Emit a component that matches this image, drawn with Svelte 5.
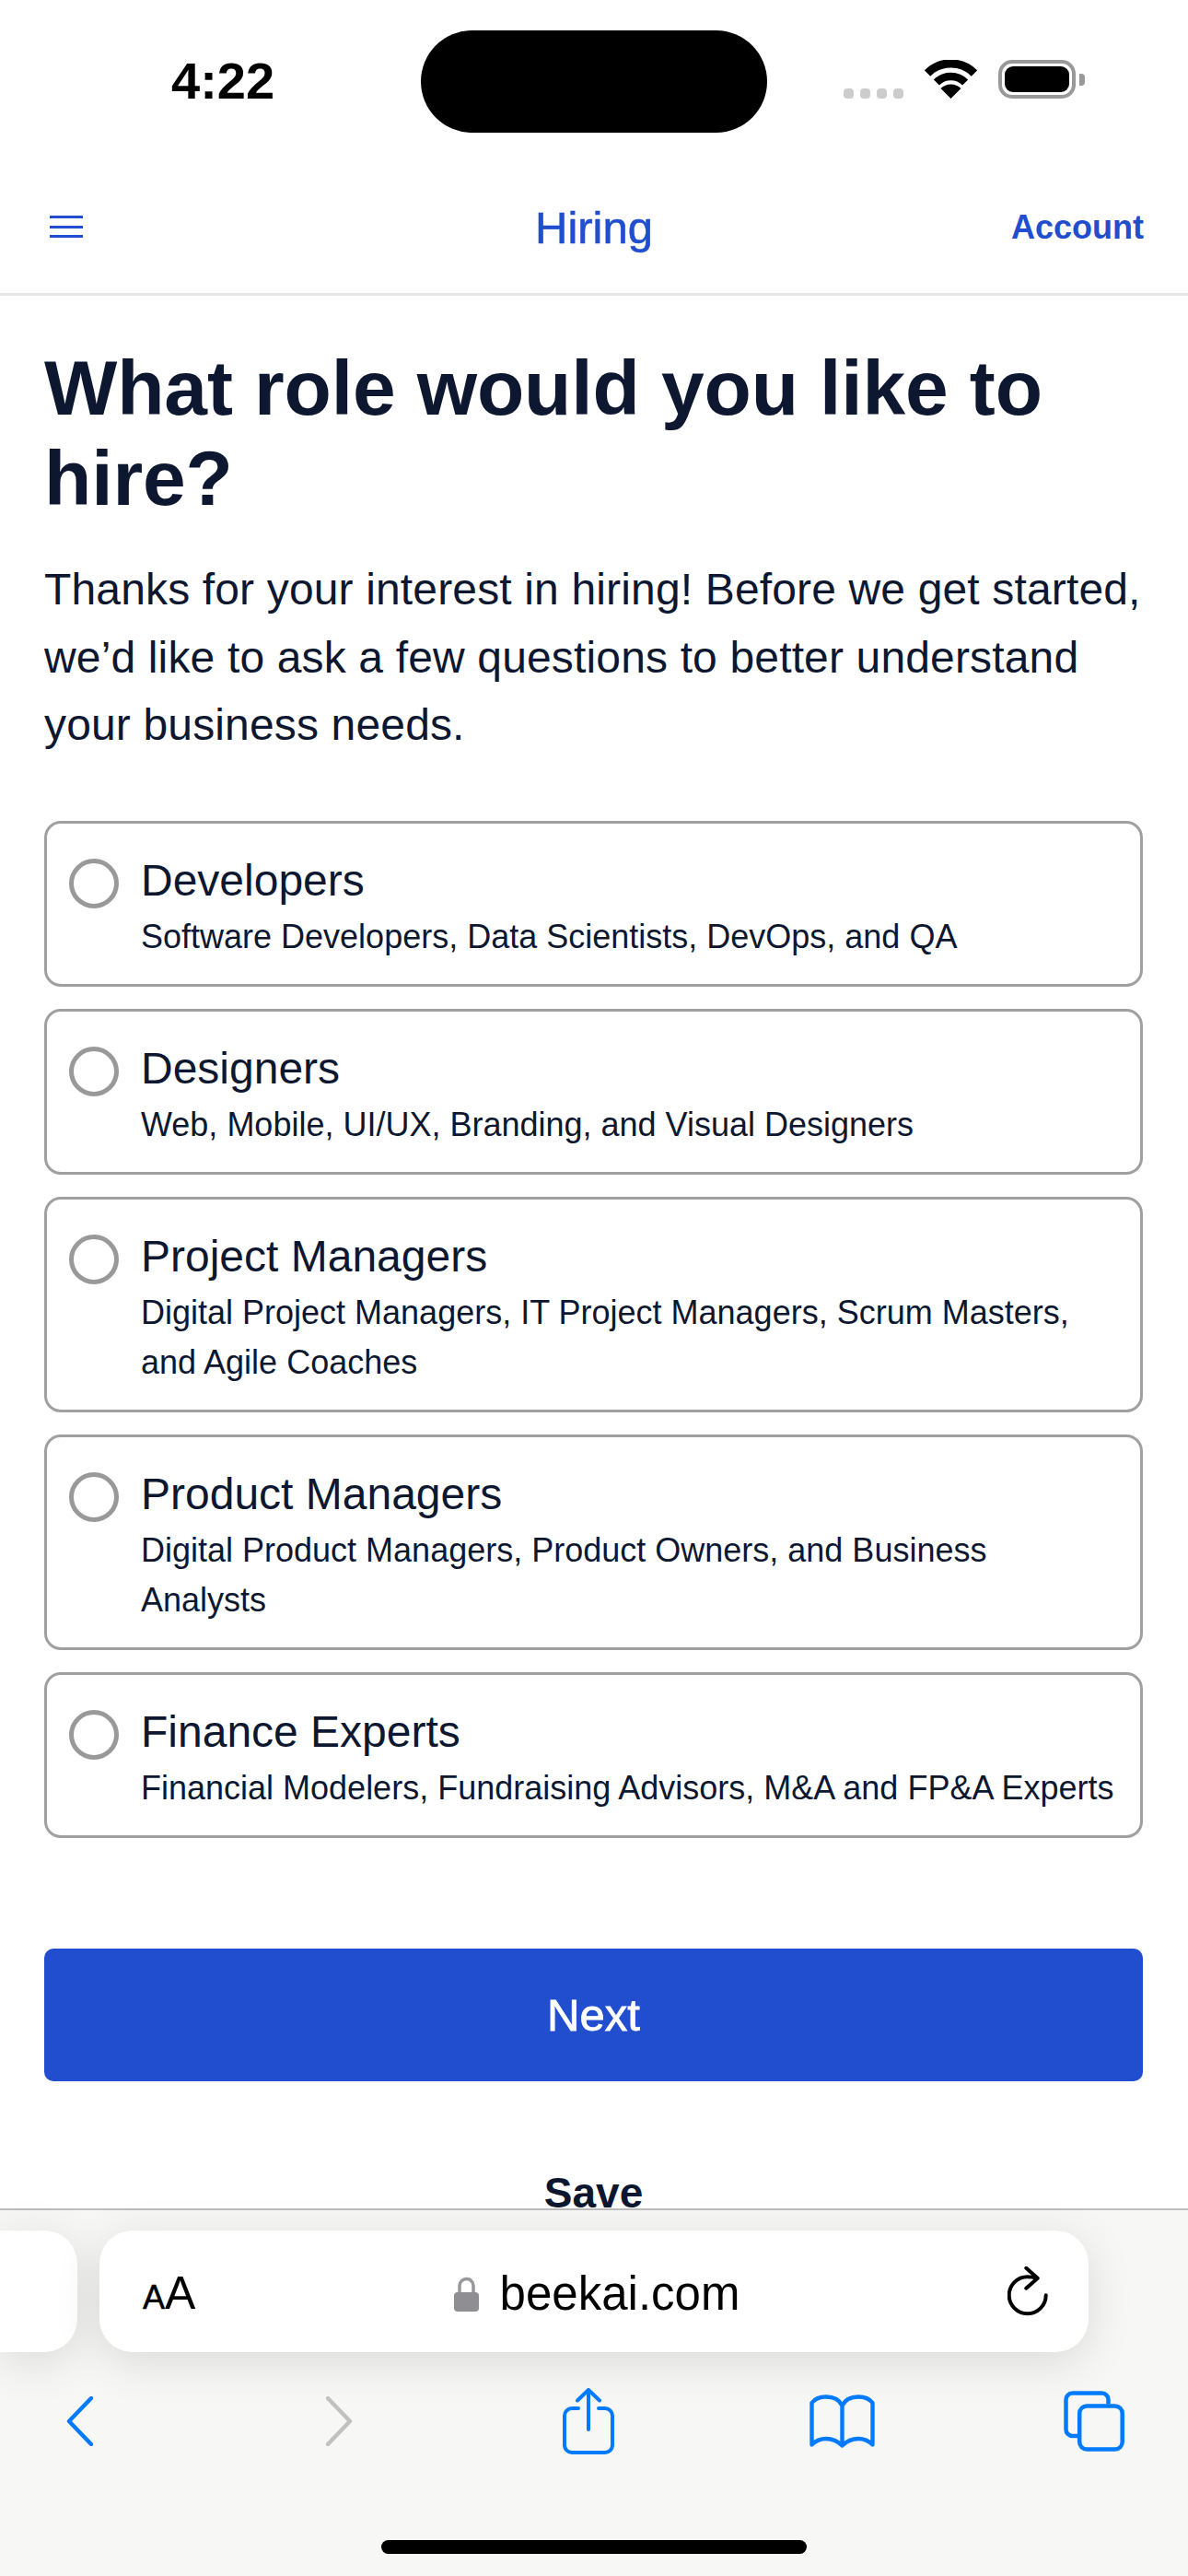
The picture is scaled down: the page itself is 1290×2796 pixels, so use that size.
<script>
	const roles = [
		{ id: 'developers', title: 'Developers', detail: 'Software Developers, Data Scientists, DevOps, and QA' },
		{ id: 'designers', title: 'Designers', detail: 'Web, Mobile, UI/UX, Branding, and Visual Designers' },
		{ id: 'pm', title: 'Project Managers', detail: 'Digital Project Managers, IT Project Managers, Scrum Masters, and Agile Coaches' },
		{ id: 'product', title: 'Product Managers', detail: 'Digital Product Managers, Product Owners, and Business Analysts' },
		{ id: 'finance', title: 'Finance Experts', detail: 'Financial Modelers, Fundraising Advisors, M&A and FP&A Experts' }
	];

	let selected = $state('');
</script>

<div class="phone">
	<div class="status">
		<span class="time">4:22</span>
		<div class="island"></div>
		<div class="status-icons">
			<div class="signal"><i></i><i></i><i></i><i></i></div>
			<svg class="wifi" viewBox="0 0 57 42" width="57" height="42" aria-hidden="true">
				<path d="M3 14.5A36 36 0 0 1 54 14.5" fill="none" stroke="#000" stroke-width="9" />
				<path d="M12.9 24.4A22 22 0 0 1 44.1 24.4" fill="none" stroke="#000" stroke-width="8.5" />
				<path d="M28.5 42L17.5 31A15.5 15.5 0 0 1 39.5 31Z" fill="#000" />
			</svg>
			<div class="battery"><div class="battery-fill"></div></div>
			<div class="battery-cap"></div>
		</div>
	</div>

	<header class="nav">
		<button class="menu" aria-label="Menu"><i></i><i></i><i></i></button>
		<span class="nav-title">Hiring</span>
		<a class="account" href="#account">Account</a>
	</header>

	<main class="content">
		<h1>What role would you like to hire?</h1>
		<p class="intro">Thanks for your interest in hiring! Before we get started, we’d like to ask a few questions to better understand your business needs.</p>

		<div class="roles">
			{#each roles as role}
				<label class="role">
					<input type="radio" name="role" value={role.id} bind:group={selected} />
					<span class="role-text">
						<span class="role-title">{role.title}</span>
						<span class="role-detail">{role.detail}</span>
					</span>
				</label>
			{/each}
		</div>

		<button class="next">Next</button>
		<button class="save">Save</button>
	</main>

	<footer class="safari">
		<div class="address-row">
			<div class="tab-peek"></div>
			<div class="address">
				<span class="aa"><small>A</small>A</span>
				<span class="url">
					<svg viewBox="0 0 27 39" width="27" height="39" aria-hidden="true">
						<path d="M6 19V11a7.5 7.5 0 0 1 15 0v8" fill="none" stroke="#98989c" stroke-width="3.5" />
						<rect x="0" y="18" width="27" height="21" rx="4" fill="#8e8e93" />
					</svg>
					beekai.com
				</span>
				<svg class="reload" viewBox="0 0 44 54" width="44" height="54" aria-hidden="true">
					<path d="M41.7 31.3A20 20 0 1 1 21.7 11.3Q27 11.3 31 12.7" fill="none" stroke="#000" stroke-width="4" stroke-linecap="round" />
					<path d="M20.3 1.8L32.7 12.7L20.3 23.7" fill="none" stroke="#000" stroke-width="4" stroke-linecap="round" stroke-linejoin="round" />
				</svg>
			</div>
		</div>

		<div class="tools">
			<svg class="tool-back" viewBox="0 0 29 54" width="29" height="54" aria-hidden="true">
				<path d="M27 2L3 27L27 52" fill="none" stroke="#007aff" stroke-width="4.4" stroke-linecap="round" stroke-linejoin="round" />
			</svg>
			<svg class="tool-forward" viewBox="0 0 29 54" width="29" height="54" aria-hidden="true">
				<path d="M2 2L26 27L2 52" fill="none" stroke="#c0c1c0" stroke-width="4.4" stroke-linecap="round" stroke-linejoin="round" />
			</svg>
			<svg class="tool-share" viewBox="0 0 57 72" width="57" height="72" aria-hidden="true">
				<path d="M17 22H10a8 8 0 0 0-8 8v32a8 8 0 0 0 8 8h36a8 8 0 0 0 8-8V30a8 8 0 0 0-8-8h-7" fill="none" stroke="#007aff" stroke-width="4" stroke-linecap="round" />
				<path d="M28 45V3M16 13.5L28 2L40 13.5" fill="none" stroke="#007aff" stroke-width="4" stroke-linecap="round" stroke-linejoin="round" />
			</svg>
			<svg class="tool-book" viewBox="0 0 71 58" width="71" height="58" aria-hidden="true">
				<path d="M35.5 12C32 5 25 2.5 18 2.5C11 2.5 6 4.5 2.5 9V54.5C7 50 12 48 18 48C25 48 31 51 35.5 55.5C40 51 46 48 53 48C59 48 64 50 68.5 54.5V9C65 4.5 60 2.5 53 2.5C46 2.5 39 5 35.5 12V55.5" fill="none" stroke="#007aff" stroke-width="4.4" stroke-linecap="round" stroke-linejoin="round" />
			</svg>
			<svg class="tool-tabs" viewBox="0 0 66 66" width="66" height="66" aria-hidden="true">
				<path d="M16 49H9.5a7 7 0 0 1-7-7V9.5a7 7 0 0 1 7-7h32a7 7 0 0 1 7 7v5" fill="none" stroke="#007aff" stroke-width="4.5" />
				<rect x="17.2" y="16.4" width="46.5" height="47.2" rx="8" fill="none" stroke="#007aff" stroke-width="4.5" />
			</svg>
		</div>

		<div class="home-indicator"></div>
	</footer>
</div>

<style>
	:global(body) {
		margin: 0;
		background: #fff;
	}

	.phone {
		display: flex;
		flex-direction: column;
		width: 1290px;
		height: 2796px;
		overflow: hidden;
		font-family: 'Liberation Sans', Arial, sans-serif;
		color: #0d1730;
		background: #fff;
	}

	/* status bar */
	.status {
		flex: none;
		display: grid;
		grid-template-columns: 457px 376px 1fr;
		height: 174px;
		box-sizing: border-box;
		padding-top: 33px;
	}

	.time {
		padding: 25px 0 0 186px;
		font-size: 56px;
		line-height: 60px;
		font-weight: 700;
		color: #000;
	}

	.island {
		height: 111px;
		border-radius: 56px;
		background: #000;
	}

	.status-icons {
		display: flex;
		align-items: flex-end;
		height: 74px;
		padding-left: 83px;
	}

	.signal {
		display: flex;
		gap: 7px;
		margin-right: 23px;
	}

	.signal i {
		width: 11px;
		height: 11px;
		border-radius: 4px;
		background: #ccc;
	}

	.wifi {
		display: block;
	}

	.battery {
		box-sizing: border-box;
		width: 84px;
		height: 42px;
		margin-left: 23px;
		padding: 3px;
		border: 4px solid #999;
		border-radius: 15px;
	}

	.battery-fill {
		height: 100%;
		border-radius: 9px;
		background: #000;
	}

	.battery-cap {
		width: 6px;
		height: 13px;
		margin: 0 0 14px 4px;
		border-radius: 0 4px 4px 0;
		background: #999;
	}

	/* site nav */
	.nav {
		flex: none;
		display: grid;
		grid-template-columns: 1fr auto 1fr;
		align-items: center;
		height: 147px;
		box-sizing: border-box;
		padding: 0 48px;
		border-bottom: 3px solid #e6e6e6;
	}

	.menu {
		display: flex;
		flex-direction: column;
		gap: 7.5px;
		width: 36px;
		margin-left: 6px;
		padding: 0;
		border: 0;
		background: none;
	}

	.menu i {
		height: 3px;
		background: #204ecf;
	}

	.nav-title {
		margin-top: 2px;
		font-size: 49px;
		line-height: 60px;
		color: #204ecf;
		-webkit-text-stroke: 0.6px #204ecf;
	}

	.account {
		justify-self: end;
		margin-top: 2px;
		font-size: 36px;
		font-weight: 700;
		color: #204ecf;
		text-decoration: none;
	}

	/* page body */
	.content {
		flex: 1;
		min-height: 0;
		overflow: hidden;
		padding: 51px 49px 0 48px;
	}

	h1 {
		margin: 0;
		font-size: 84px;
		line-height: 98px;
		font-weight: 700;
		letter-spacing: -0.13px;
	}

	.intro {
		margin: 35px 0 0;
		font-size: 48px;
		line-height: 73.5px;
		letter-spacing: 0.15px;
	}

	.roles {
		display: flex;
		flex-direction: column;
		gap: 24px;
		margin-top: 67px;
	}

	.role {
		display: flex;
		gap: 24px;
		padding: 32px 24px 24px;
		border: 3px solid #a0a0a0;
		border-radius: 18px;
	}

	.role input {
		flex: none;
		appearance: none;
		box-sizing: border-box;
		width: 54px;
		height: 54px;
		margin: 6px 0 0;
		border: 5px solid #999;
		border-radius: 50%;
	}

	.role-text {
		display: flex;
		flex-direction: column;
		gap: 4px;
	}

	.role-title {
		font-size: 48px;
		line-height: 60px;
	}

	.role-detail {
		font-size: 36px;
		line-height: 54px;
	}

	.next {
		display: block;
		width: 100%;
		height: 144px;
		margin-top: 120px;
		border: 0;
		border-radius: 10px;
		background: #204ecf;
		color: #fff;
		font: 400 49px 'Liberation Sans', Arial, sans-serif;
		-webkit-text-stroke: 0.8px #fff;
	}

	.save {
		display: block;
		width: 100%;
		margin-top: 95px;
		padding: 0;
		border: 0;
		background: none;
		color: #0d1730;
		font: 700 46px/52px 'Liberation Sans', Arial, sans-serif;
	}

	/* safari chrome */
	.safari {
		flex: none;
		display: flex;
		flex-direction: column;
		height: 399px;
		box-sizing: border-box;
		padding-top: 22px;
		border-top: 2px solid #bcbcbc;
		background: #f7f7f6;
	}

	.address-row {
		display: flex;
		gap: 24px;
	}

	.tab-peek,
	.address {
		height: 132px;
		background: #fff;
		box-shadow: 0 10px 50px rgba(0, 0, 0, 0.12);
	}

	.tab-peek {
		width: 84px;
		border-radius: 0 36px 36px 0;
	}

	.address {
		display: grid;
		grid-template-columns: 1fr auto 1fr;
		align-items: center;
		width: 1074px;
		box-sizing: border-box;
		padding: 0 41px 0 47px;
		border-radius: 36px;
	}

	.aa {
		margin-top: 4px;
		font-size: 50px;
		color: #000;
	}

	.aa small {
		font-size: 36px;
		-webkit-text-stroke: 0.5px #000;
	}

	.url {
		display: flex;
		align-items: center;
		gap: 23px;
		margin-top: 4px;
		font-size: 51px;
		color: #000;
	}

	.reload {
		justify-self: end;
		margin-right: 3px;
	}

	.tools {
		display: flex;
		align-items: center;
		height: 72px;
		margin-top: 39px;
	}

	.tool-back {
		margin-left: 72px;
	}

	.tool-forward {
		margin-left: 253px;
	}

	.tool-share {
		margin-left: 228px;
	}

	.tool-book {
		margin-left: 211px;
	}

	.tool-tabs {
		margin-left: 205px;
	}

	.home-indicator {
		width: 462px;
		height: 15px;
		margin: auto auto 24px;
		border-radius: 8px;
		background: #000;
	}
</style>
